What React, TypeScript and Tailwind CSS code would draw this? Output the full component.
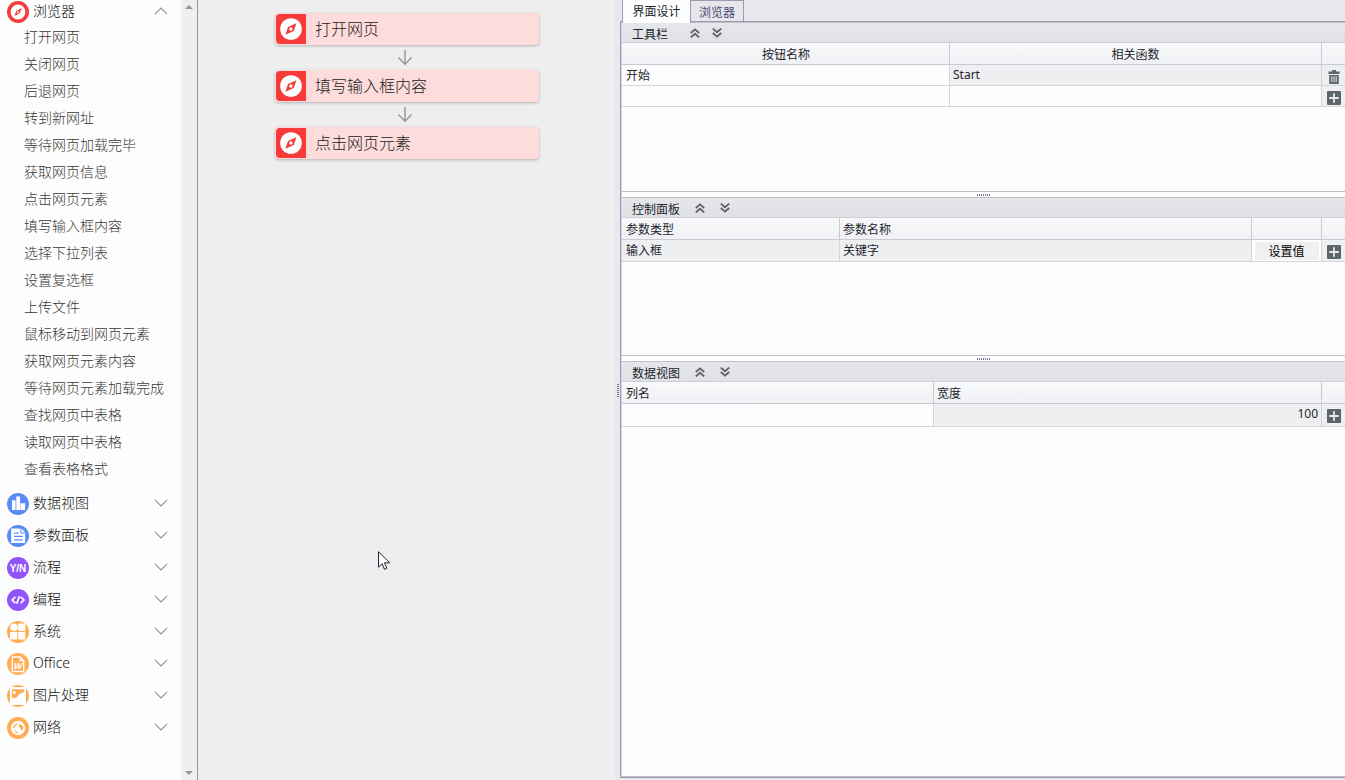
import type { ReactNode } from "react";

type Group = {
  title: string;
  icon: ReactNode;
};

const Disc = ({ color, children }: { color: string; children: ReactNode }) => (
  <svg viewBox="0 0 22 22" className="size-[22px] shrink-0" aria-hidden="true">
    <circle cx="11" cy="11" r="11" fill={color} />
    {children}
  </svg>
);

const BrowserIcon = () => (
  <Disc color="#f73b3b">
    <circle cx="11" cy="11" r="7.4" fill="#fff" />
    <path d="M14.8 7 12.8 12.3 7.4 15 9.3 10Z" fill="#f73b3b" />
    <circle cx="11" cy="11.2" r="1" fill="#fff" />
  </Disc>
);

const groups: Group[] = [
  {
    title: "数据视图",
    icon: (
      <Disc color="#5a8bf8">
        <path d="M5 7.3h3.4V17H5zM9.3 3.5h3.7V17H9.3zM13.9 10.2h4.2V17h-4.2z" fill="#fff" />
        <path d="M8.4 8v9h.9V8zM13 10.2V17h.9v-6.8z" fill="#c9dafd" />
      </Disc>
    ),
  },
  {
    title: "参数面板",
    icon: (
      <Disc color="#5a8bf8">
        <path d="M4.2 3.6h9.2v4.8h4.8V18h-14z" fill="#fff" />
        <path d="M14.4 3.6 18.4 7.4h-4z" fill="#fff" />
        <path d="M7 8.2h4.8M7 11.4h8.8M7 14.8h8.8" stroke="#5a8bf8" strokeWidth="1.3" />
      </Disc>
    ),
  },
  {
    title: "流程",
    icon: (
      <Disc color="#8f55fb">
        <text
          x="11"
          y="14.6"
          textAnchor="middle"
          fill="#fff"
          fontSize="10"
          fontWeight="700"
          fontFamily="Liberation Sans Narrow, Liberation Sans, sans-serif"
        >
          Y/N
        </text>
      </Disc>
    ),
  },
  {
    title: "编程",
    icon: (
      <Disc color="#8f55fb">
        <path
          d="M8.4 7.8 5 11l3.4 3.2M13.6 7.8 17 11l-3.4 3.2M12.4 7.4 9.7 14.6"
          fill="none"
          stroke="#fff"
          strokeWidth="1.7"
          strokeLinejoin="round"
        />
      </Disc>
    ),
  },
  {
    title: "系统",
    icon: (
      <Disc color="#ffad55">
        <circle cx="7" cy="6.3" r="3.8" fill="#fff" />
        <path d="M11.3 2.6h7v7.5h-7zM3 11h7.3v7.6H3zM11.3 11h7v7.6h-7z" fill="#fff" />
      </Disc>
    ),
  },
  {
    title: "Office",
    icon: (
      <Disc color="#ffad55">
        <path d="M5.3 4h7.8l3.6 3.6v10.9H5.3z" fill="none" stroke="#fff" strokeWidth="1.4" />
        <path d="M12.6 4v4.2h4.2z" fill="#fff" />
        <text
          x="10.9"
          y="16.2"
          textAnchor="middle"
          fill="#fff"
          fontSize="9"
          fontWeight="700"
          fontStyle="italic"
          fontFamily="Liberation Sans, sans-serif"
        >
          W
        </text>
      </Disc>
    ),
  },
  {
    title: "图片处理",
    icon: (
      <Disc color="#ffad55">
        <path d="M3 1.8h16v18.4H3z" fill="#fff" />
        <path d="M5 4.2h12.2v2.8L12.8 8.8 9.6 12.4 5 13.2z" fill="#ffad55" />
        <path d="M5 2h12l-2-1H7zM5 20h12l-2 1H7z" fill="#ffad55" />
        <circle cx="7.4" cy="7.4" r="1.5" fill="#fff" />
      </Disc>
    ),
  },
  {
    title: "网络",
    icon: (
      <Disc color="#ffad55">
        <circle cx="11" cy="11" r="7.2" fill="#fff" />
        <path d="M5.8 10.8c.4-3 2.6-4.6 5.4-4.4l-1 1.4-2 1-.2 2z" fill="#ffad55" />
        <path d="M11 8.8 13.6 7l2.7 2.8-.4 2.6-1.6 1-1-2.6z" fill="#ffad55" />
        <path d="M6.8 13.2l2.8 1 2 1.8-2.4-.2z" fill="#ffad55" />
      </Disc>
    ),
  },
];

const browserActions = [
  "打开网页",
  "关闭网页",
  "后退网页",
  "转到新网址",
  "等待网页加载完毕",
  "获取网页信息",
  "点击网页元素",
  "填写输入框内容",
  "选择下拉列表",
  "设置复选框",
  "上传文件",
  "鼠标移动到网页元素",
  "获取网页元素内容",
  "等待网页元素加载完成",
  "查找网页中表格",
  "读取网页中表格",
  "查看表格格式",
];

const steps = ["打开网页", "填写输入框内容", "点击网页元素"];

const Caret = ({ up }: { up?: boolean }) => (
  <svg viewBox="0 0 14 8" className="mb-0.5 h-2 w-3.5" aria-hidden="true">
    <path
      d={up ? "M1 7.2 7 1.2l6 6" : "M1 .8l6 6 6-6"}
      fill="none"
      stroke="#84969c"
      strokeWidth="1.2"
    />
  </svg>
);

const Sidebar = () => (
  <aside className="flex shrink-0 border-r border-[#96979b]">
    <nav className="w-[181px] bg-[#fdfdfd] text-sm font-light text-[#111]">
      <button className="flex h-6 w-full items-center gap-1 pr-[13px] pl-[7px] text-left">
        <BrowserIcon />
        <span className="flex-1 pb-0.5 leading-5">浏览器</span>
        <Caret up />
      </button>
      <ul className="mb-[5px] text-[#383838]">
        {browserActions.map((name) => (
          <li key={name}>
            <button className="block h-[27px] w-full pb-0.5 pl-6 text-left leading-6">
              {name}
            </button>
          </li>
        ))}
      </ul>
      {groups.map(({ title, icon }) => (
        <button
          key={title}
          className="flex h-8 w-full items-center gap-1 pr-[13px] pl-[7px] text-left"
        >
          {icon}
          <span className="flex-1 pb-0.5 leading-5">{title}</span>
          <Caret />
        </button>
      ))}
    </nav>
    <div className="flex w-4 flex-col items-center justify-between bg-[#efefef] py-[5px]">
      <button aria-label="向上滚动">
        <svg viewBox="0 0 8 4" className="block h-1 w-2">
          <path d="M0 4 4 0l4 4z" fill="#96979b" />
        </svg>
      </button>
      <button aria-label="向下滚动">
        <svg viewBox="0 0 8 4" className="block h-1 w-2">
          <path d="M0 0h8L4 4z" fill="#96979b" />
        </svg>
      </button>
    </div>
  </aside>
);

const FlowArrow = () => (
  <svg viewBox="0 0 16 25" className="mx-auto block h-[25px] w-4" aria-hidden="true">
    <path d="M8 5v14M1.5 12.5 8 19.2l6.5-6.7" fill="none" stroke="#999" strokeWidth="1.5" />
  </svg>
);

const Canvas = () => (
  <main className="relative min-w-0 flex-[417_1_0%] bg-[#eee]">
    <ol className="mt-[13px] ml-[77px] w-[264px]">
      {steps.map((step, i) => (
        <li key={step}>
          {i > 0 && (
            <div className="pr-1">
              <FlowArrow />
            </div>
          )}
          <div className="flex h-8 items-center overflow-hidden rounded bg-[#fedcdc] pl-px text-base font-light text-[#222] shadow-[0_1px_3px_rgba(0,0,0,0.25)]">
            <span className="flex size-[30px] shrink-0 items-center justify-center rounded-l-sm bg-[#f73b3b]">
              <svg viewBox="0 0 22 22" className="size-[22px]" aria-hidden="true">
                <circle cx="11" cy="11" r="10.8" fill="#fff" />
                <path d="M16.4 5.2 13.8 13 5.4 16.8 8 9Z" fill="#f73b3b" />
                <circle cx="10.9" cy="11" r="1.7" fill="#fff" />
              </svg>
            </span>
            <span className="pl-[9px] leading-6">{step}</span>
          </div>
        </li>
      ))}
    </ol>
    <svg
      viewBox="0 0 13 20"
      className="absolute top-[551px] left-[180px] h-5 w-[13px]"
      aria-hidden="true"
    >
      <path
        d="M.5.8v15.4l3.6-3.5 2.3 5.6 2.4-1-2.3-5.5h5.2z"
        fill="#fff"
        stroke="#23233c"
        strokeWidth="1"
      />
    </svg>
  </main>
);

const DoubleChevron = ({ up }: { up?: boolean }) => (
  <svg viewBox="0 0 10 10" className="block size-2.5" aria-hidden="true">
    <path
      d={up ? "M.8 5 5 1.4 9.2 5M.8 9.4 5 5.8l4.2 3.6" : "M.8.6 5 4.2 9.2.6M.8 5 5 8.6 9.2 5"}
      fill="none"
      stroke="#5f6163"
      strokeWidth="1.8"
    />
  </svg>
);

const PlusButton = () => (
  <button aria-label="添加" className="mx-auto mt-[5px] block">
    <svg viewBox="0 0 14 14" className="block size-3.5">
      <rect width="14" height="14" rx="1" fill="#5b656a" />
      <path d="M7 2.2v9.6M2.2 7h9.6" stroke="#e4e7e8" strokeWidth="1.8" />
    </svg>
  </button>
);

const TrashButton = () => (
  <button aria-label="删除" className="mx-auto mt-[5px] block">
    <svg viewBox="0 0 12 14" className="block h-3.5 w-3">
      <path d="M4 0h4v1.4h3.5V4H.5V1.4H4z" fill="#5b656a" />
      <path d="M1.2 5h9.6v8.2a.8.8 0 0 1-.8.8H2a.8.8 0 0 1-.8-.8z" fill="#5b656a" />
      <path d="M3.8 6.2v6M6 6.2v6M8.2 6.2v6" stroke="#e4e7e8" strokeWidth="1" />
    </svg>
  </button>
);

const Section = ({
  title,
  titleClass,
  gapClass,
  className,
  children,
}: {
  title: string;
  titleClass: string;
  gapClass: string;
  className: string;
  children: ReactNode;
}) => (
  <section className={`border-y border-[#bfc0ca] bg-[#fdfdfd] ${className}`}>
    <header className="flex h-5 items-center border-b border-[#cfd0d6] bg-linear-to-b from-[#e6e7ea] to-[#e0e1e5] pl-2.5">
      <h2 className={`pt-1 leading-4 ${titleClass}`}>{title}</h2>
      <div className={`flex ${gapClass}`}>
        <button aria-label={`收起${title}`}>
          <DoubleChevron up />
        </button>
        <button aria-label={`展开${title}`}>
          <DoubleChevron />
        </button>
      </div>
    </header>
    {children}
  </section>
);

const tableClass = "w-full table-fixed border-separate border-spacing-0";
const thClass =
  "h-[22px] border-r border-b border-[#c8c9d2] bg-linear-to-b from-[#f8f9fa] to-[#f0f1f4] p-0 px-[3px] pt-0.5 font-normal leading-[19px] first:pl-1 last:border-r-0";
const tdClass = "border-r border-b border-[#d5d6dc] p-0 align-top first:pl-px last:border-r-0";

const Cell = ({
  label,
  value = "",
  className = "",
}: {
  label: string;
  value?: string;
  className?: string;
}) => (
  <input
    aria-label={label}
    defaultValue={value}
    className={`block h-5 w-full bg-transparent px-[3px] pb-px outline-none ${className}`}
  />
);

const Grip = ({ className = "" }: { className?: string }) => (
  <span className={`flex gap-px ${className}`}>
    {[0, 1, 2, 3, 4, 5, 6].map((n) => (
      <span key={n} className="size-px bg-[#777892]" />
    ))}
  </span>
);

const Splitter = () => (
  <div className="flex h-[5px] cursor-row-resize flex-col items-center justify-center bg-white">
    <Grip />
    <Grip />
  </div>
);

const Designer = () => (
  <div className="flex min-w-0 flex-[725_1_0%] flex-col bg-[#e9e8ee] pb-0.5 text-xs text-[#1e1e2d]">
    <div className="flex h-[21px] items-start pl-0.5" role="tablist">
      <button
        role="tab"
        aria-selected="true"
        className="z-10 h-[23px] w-[69px] border-x border-[#9a9bab] bg-[#fdfdfd] leading-[22px]"
      >
        界面设计
      </button>
      <button
        role="tab"
        aria-selected="false"
        className="h-[21px] w-[53px] border-t border-r border-[#9a9bab] bg-[#e6e6ec] pt-0.5 leading-5 text-[#4a4a70]"
      >
        浏览器
      </button>
    </div>
    <div className="flex flex-1 flex-col border-y border-l border-[#9a9bab]">
      <div className="flex flex-1 flex-col border-l border-[#d3d4db]">
        <Section title="工具栏" titleClass="mr-[22px]" gapClass="gap-3" className="h-[170px]">
          <table className={tableClass}>
            <colgroup>
              <col className="w-[328px]" />
              <col />
              <col className="w-[23px]" />
            </colgroup>
            <thead>
              <tr>
                <th className={thClass}>按钮名称</th>
                <th className={thClass}>相关函数</th>
                <th className={thClass} />
              </tr>
            </thead>
            <tbody>
              <tr className="h-[21px]">
                <td className={tdClass}>
                  <Cell label="按钮名称" value="开始" />
                </td>
                <td className={`${tdClass} bg-[#eeeff1]`}>
                  <Cell label="相关函数" value="Start" />
                </td>
                <td className={`${tdClass} bg-[#eeeff1]`}>
                  <TrashButton />
                </td>
              </tr>
              <tr className="h-[21px]">
                <td className={tdClass}>
                  <Cell label="新按钮名称" />
                </td>
                <td className={tdClass}>
                  <Cell label="新相关函数" />
                </td>
                <td className={`${tdClass} bg-[#f0f0f2]`}>
                  <PlusButton />
                </td>
              </tr>
            </tbody>
          </table>
        </Section>
        <Splitter />
        <Section
          title="控制面板"
          titleClass="mr-[15px]"
          gapClass="gap-[15px]"
          className="h-[159px]"
        >
          <table className={tableClass}>
            <colgroup>
              <col className="w-[218px]" />
              <col />
              <col className="w-[70px]" />
              <col className="w-[23px]" />
            </colgroup>
            <thead className="text-left">
              <tr>
                <th className={thClass}>参数类型</th>
                <th className={thClass}>参数名称</th>
                <th className={thClass} />
                <th className={thClass} />
              </tr>
            </thead>
            <tbody>
              <tr className="h-[22px] bg-[#eeeff1]">
                <td className={tdClass}>
                  <Cell label="参数类型" value="输入框" />
                </td>
                <td className={tdClass}>
                  <Cell label="参数名称" value="关键字" />
                </td>
                <td className={`${tdClass} bg-white`}>
                  <button className="mx-auto mt-0.5 block h-[18px] w-16 bg-[#f0f0f0] leading-[19px] text-black">
                    设置值
                  </button>
                </td>
                <td className={tdClass}>
                  <PlusButton />
                </td>
              </tr>
            </tbody>
          </table>
        </Section>
        <Splitter />
        <Section
          title="数据视图"
          titleClass="mr-[15px]"
          gapClass="gap-[15px]"
          className="flex-1"
        >
          <table className={tableClass}>
            <colgroup>
              <col className="w-[312px]" />
              <col />
              <col className="w-[23px]" />
            </colgroup>
            <thead className="text-left">
              <tr>
                <th className={thClass}>列名</th>
                <th className={thClass}>宽度</th>
                <th className={thClass} />
              </tr>
            </thead>
            <tbody>
              <tr className="h-[23px]">
                <td className={tdClass}>
                  <Cell label="列名" />
                </td>
                <td className={`${tdClass} bg-[#eeeff1]`}>
                  <Cell label="宽度" value="100" className="text-right" />
                </td>
                <td className={`${tdClass} bg-[#eeeff1]`}>
                  <PlusButton />
                </td>
              </tr>
            </tbody>
          </table>
        </Section>
      </div>
    </div>
  </div>
);

const App = () => {
  return (
    <div className="flex min-h-screen bg-[#eee] font-['Noto_Sans','Noto_Sans_CJK_SC',sans-serif]">
      <Sidebar />
      <Canvas />
      <div className="flex w-[5px] shrink-0 cursor-col-resize items-center justify-center bg-[#e9e8ee]">
        <Grip className="flex-col" />
        <Grip className="flex-col" />
      </div>
      <Designer />
    </div>
  );
};

export default App;
